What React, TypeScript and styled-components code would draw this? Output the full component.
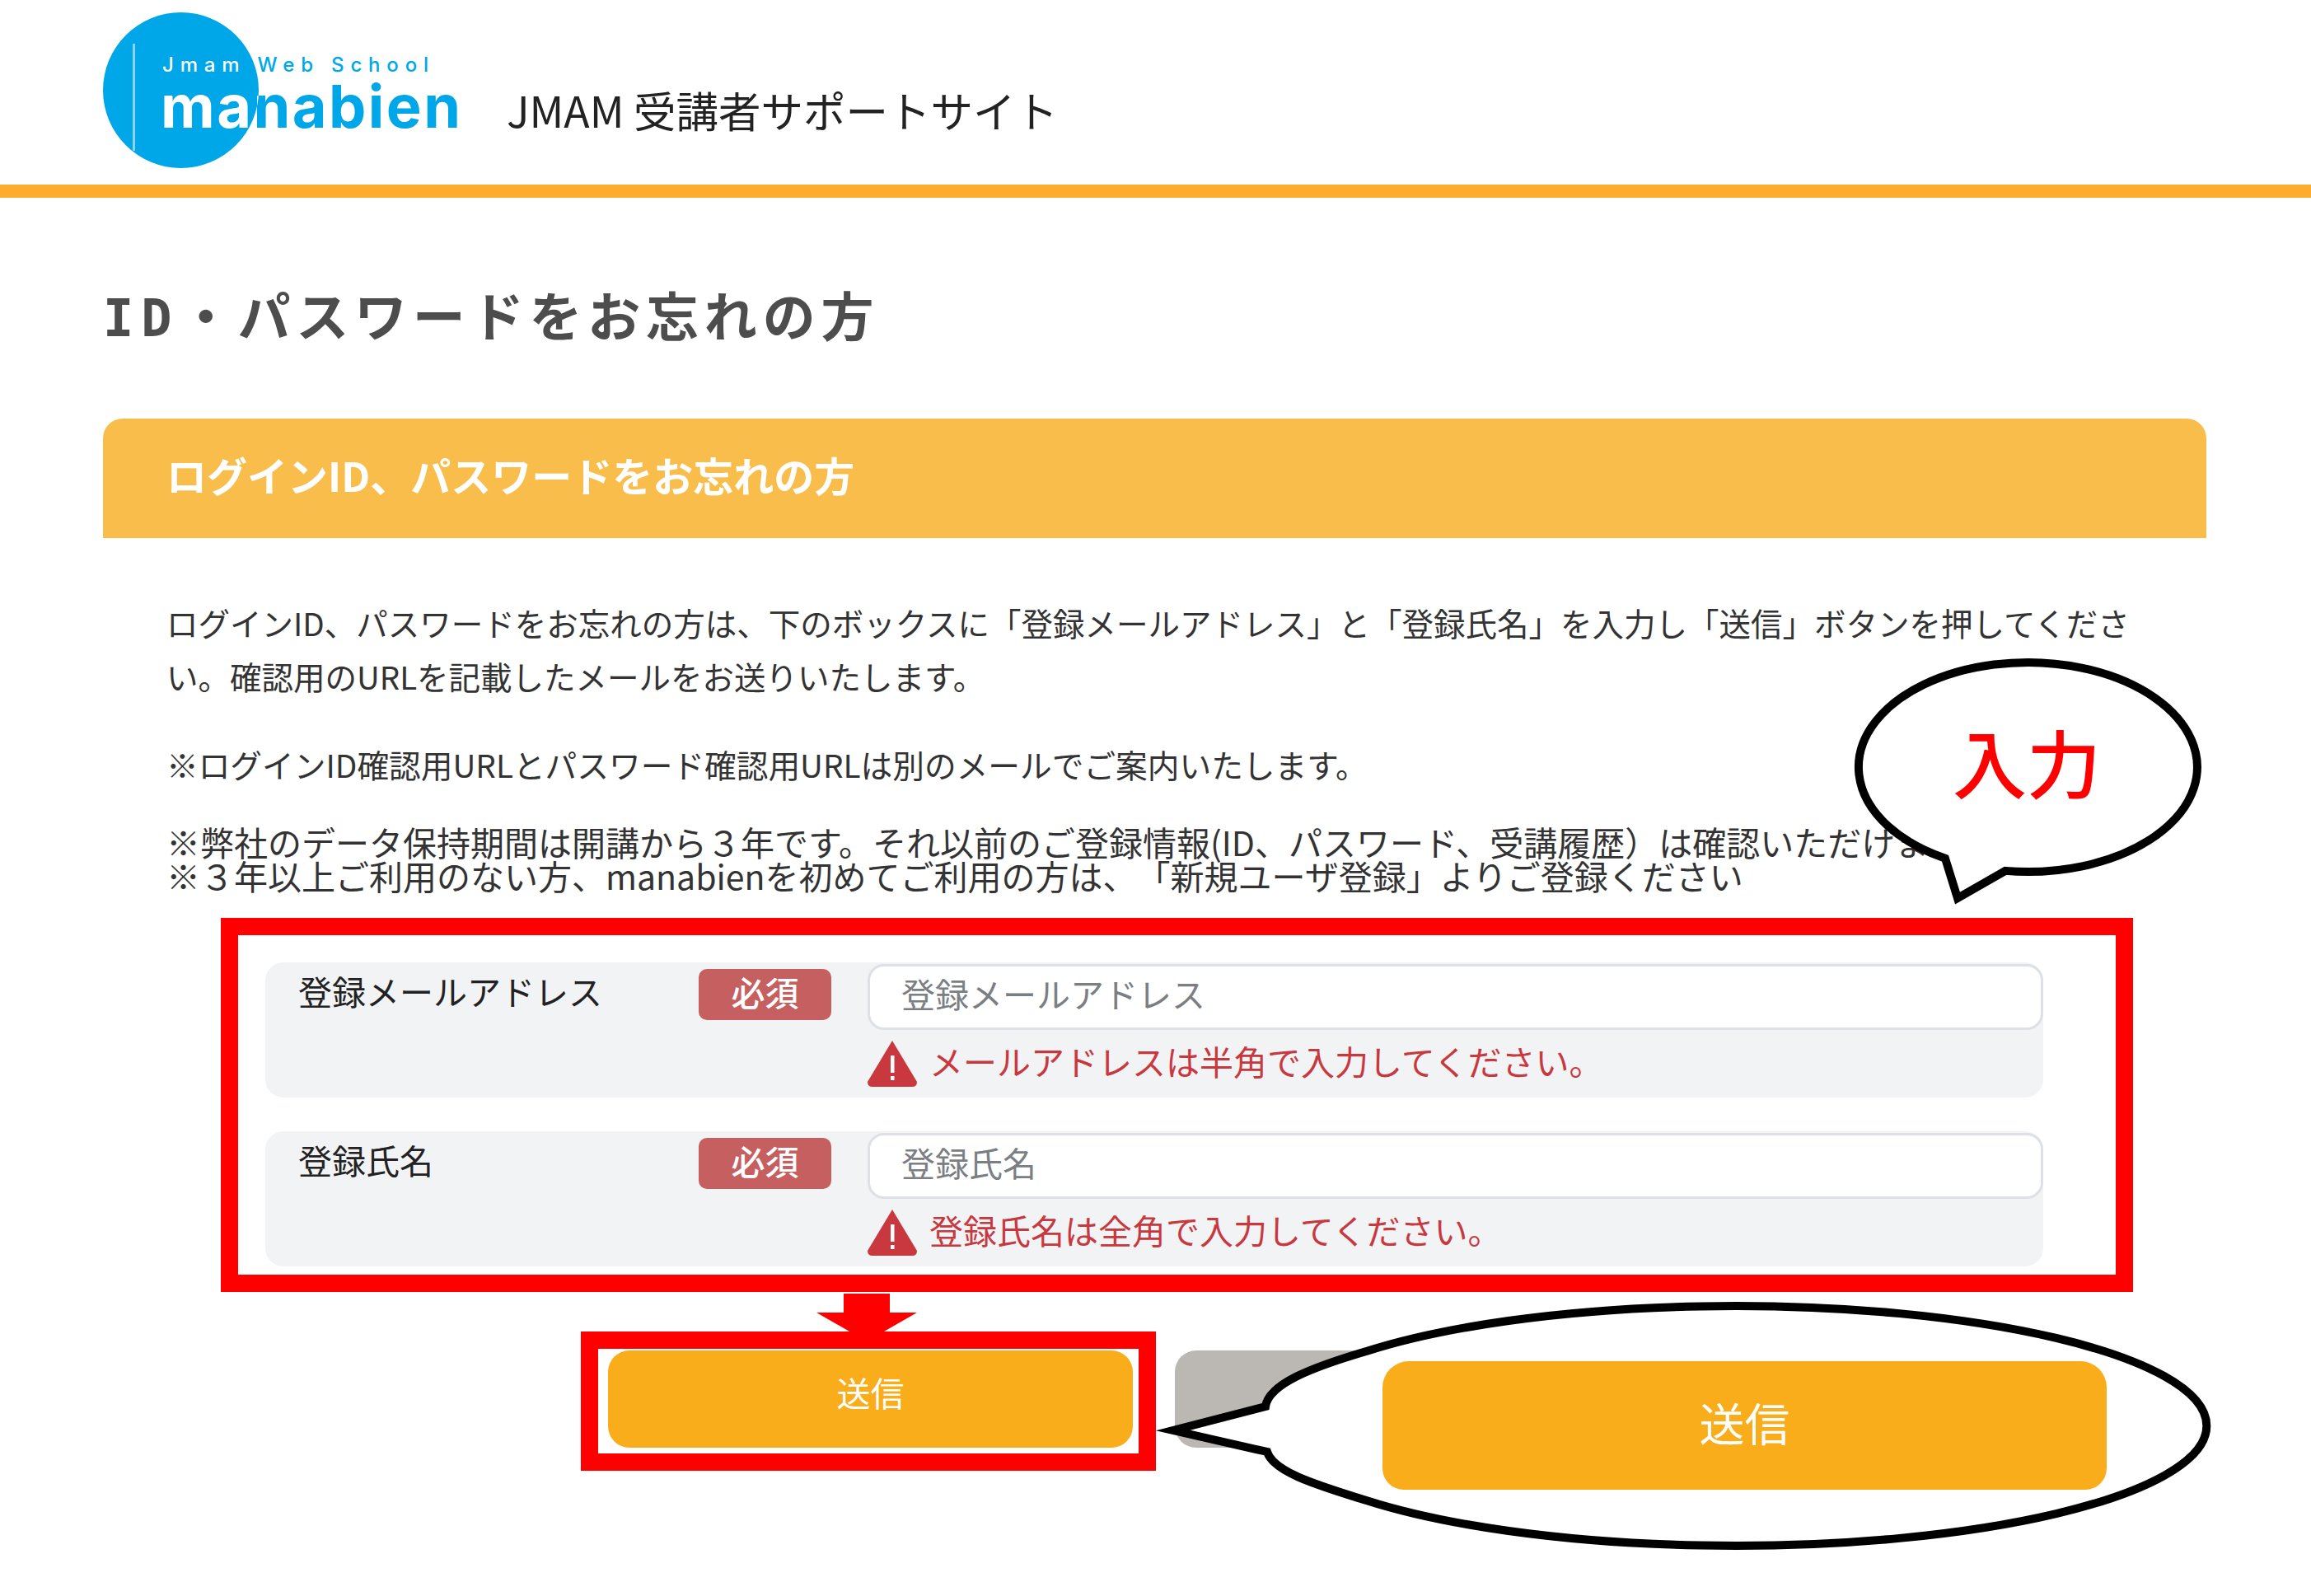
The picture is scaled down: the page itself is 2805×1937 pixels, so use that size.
import styled, { createGlobalStyle } from "styled-components";

const FONT = `"Noto Sans CJK JP", "Noto Sans", sans-serif`;

const Global = createGlobalStyle`
  html, body {
    margin: 0;
    padding: 0;
    background: #fff;
  }
  * {
    box-sizing: border-box;
  }
`;

interface FieldProps {
  label: string;
  error: string;
}

function Field(props: FieldProps) {
  return (
    <FieldRow>
      <FieldLabel>{props.label}</FieldLabel>
      <RequiredBadge>必須</RequiredBadge>
      <FieldInput placeholder={props.label} />
      <ErrorLine>
        <svg width="60" height="56" viewBox="0 0 60 56">
          <path d="M30 0 L60 50 Q60 56 54 56 L6 56 Q0 56 0 50 Z" fill="#c8383e" />
          <rect x="28" y="18" width="4.5" height="21" fill="#fff" />
          <rect x="28" y="43" width="4.5" height="5" fill="#fff" />
        </svg>
        <ErrorText>{props.error}</ErrorText>
      </ErrorLine>
    </FieldRow>
  );
}

function Logo() {
  return (
    <svg width="460" height="224" viewBox="0 0 460 224">
      <defs>
        {/* letters turn white where they cross the circle */}
        <pattern id="logo-ink" patternUnits="userSpaceOnUse" width="460" height="224">
          <rect width="460" height="224" fill="#00a7e8" />
          <circle cx="94.5" cy="109.5" r="94.5" fill="#fff" />
        </pattern>
      </defs>
      <circle cx="94.5" cy="109.5" r="94.5" fill="#00a7e8" />
      <rect x="36" y="53" width="3" height="130" fill="#8dd4f3" />
      <LogoSmall x="72" y="87" textLength="323" fill="url(#logo-ink)">Jmam Web School</LogoSmall>
      <LogoBig x="70" y="155" textLength="364" fill="url(#logo-ink)">manabien</LogoBig>
    </svg>
  );
}

export default function App() {
  return (
    <Page>
      <Global />
      <Header>
        <Logo />
        <SiteTitle>JMAM 受講者サポートサイト</SiteTitle>
      </Header>
      <Main>
        <PageTitle><Latin>ID</Latin>・パスワードをお忘れの方</PageTitle>
        <PanelHead>ログインID、パスワードをお忘れの方</PanelHead>
        <PanelBody>
          <Lead>
            ログインID、パスワードをお忘れの方は、下のボックスに「登録メールアドレス」と「登録氏名」を入力し「送信」ボタンを押してください。確認用のURLを記載したメールをお送りいたします。
          </Lead>
          <Note>※ログインID確認用URLとパスワード確認用URLは別のメールでご案内いたします。</Note>
          <Retention>
            <div>※弊社のデータ保持期間は開講から３年です。それ以前のご登録情報(ID、パスワード、受講履歴）は確認いただけません。</div>
            <div>※３年以上ご利用のない方、manabienを初めてご利用の方は、「新規ユーザ登録」よりご登録ください</div>
          </Retention>
          <Fields>
            <Field label="登録メールアドレス" error="メールアドレスは半角で入力してください。" />
            <Field label="登録氏名" error="登録氏名は全角で入力してください。" />
          </Fields>
          <Actions>
            <SendButton>送信</SendButton>
            <BackButton />
          </Actions>
        </PanelBody>
      </Main>

      <InputFrame />
      <SendFrame />
      <CalloutDrawing width="2805" height="1937" viewBox="0 0 2805 1937">
        <path d="M1024 1570 H1080 V1593 H1113 L1052 1628 L991 1593 H1024 Z" fill="#f00" />
        <path
          d="M2434 1056.86 A205.5 127 0 1 0 2361 1041.8 L2376 1090 Z"
          fill="#fff"
          stroke="#000"
          strokeWidth="10"
          strokeMiterlimit="10"
        />
        <path
          d="M1536 1707 C1540 1680 1590 1660 1660 1639.5 A572 145.5 0 1 1 1660 1821.5 C1590 1800 1545 1785 1538 1762 L1424 1736 Z"
          fill="#fff"
          stroke="#000"
          strokeWidth="10"
          strokeMiterlimit="10"
        />
      </CalloutDrawing>
      <InputCaption>入力</InputCaption>
      <ZoomedButton>送信</ZoomedButton>
    </Page>
  );
}

const Page = styled.div`
  position: relative;
  width: 2805px;
  min-height: 1937px;
  font-family: ${FONT};
  color: #333;
  overflow: hidden;
  text-spacing-trim: space-all;
`;

const Header = styled.header`
  display: flex;
  align-items: flex-start;
  height: 240px;
  padding-left: 125px;
  border-bottom: 16px solid #fdad2b;
`;

const LogoSmall = styled.text`
  font-family: "Inter", "Liberation Sans", sans-serif;
  font-size: 24px;
  font-weight: 500;
`;

const LogoBig = styled.text`
  font-family: "Inter", "Liberation Sans", sans-serif;
  font-size: 72px;
  font-weight: 700;
`;

const SiteTitle = styled.div`
  margin: 96px 0 0 30px;
  font-size: 51.5px;
  line-height: 74px;
  color: #222;
  white-space: nowrap;
`;

const Main = styled.main`
  padding: 0 127px 0 125px;
`;

const PageTitle = styled.h1`
  margin: 101px 0 0;
  height: 167px;
  font-size: 64px;
  line-height: 78px;
  font-weight: 700;
  letter-spacing: 6.8px;
  color: #4d4d4d;
`;

const Latin = styled.span`
  font-family: "DejaVu Sans Mono", monospace;
  letter-spacing: 9px;
  font-size: 62px;
`;

const PanelHead = styled.div`
  height: 145px;
  padding: 0 77px 10px;
  display: flex;
  align-items: center;
  background: #f9bd4c;
  border-radius: 24px 24px 0 0;
  color: #fff;
  font-size: 49px;
  font-weight: 700;
`;

const PanelBody = styled.div`
  padding: 70px 0 0 77px;
`;

const Lead = styled.p`
  margin: 0;
  width: 2400px;
  font-size: 38.5px;
  line-height: 65px;
`;

const Note = styled.p`
  margin: 42px 0 0;
  font-size: 38.7px;
  line-height: 65px;
`;

const Retention = styled.div`
  margin-top: 41px;
  font-size: 41px;
  line-height: 41px;
  white-space: nowrap;
`;

const Fields = styled.div`
  margin: 85px 0 0 120px;
  width: 2158px;
  display: flex;
  flex-direction: column;
  gap: 41px;
`;

const FieldRow = styled.div`
  display: grid;
  grid-template-columns: 482px 161px 1fr;
  grid-template-rows: auto auto;
  align-content: start;
  column-gap: 44px;
  height: 164px;
  padding-top: 2px;
  background: #f2f3f5;
  border-radius: 22px;
`;

const FieldLabel = styled.div`
  padding-left: 40px;
  font-size: 41px;
  line-height: 65px;
  color: #222;
`;

const RequiredBadge = styled.div`
  height: 62px;
  margin-top: 6px;
  padding-bottom: 8px;
  display: flex;
  align-items: center;
  justify-content: center;
  background: #c66060;
  border-radius: 10px;
  color: #fff;
  font-size: 41px;
  font-weight: 500;
`;

const FieldInput = styled.input`
  width: 100%;
  height: 80px;
  padding: 0 38px 10px;
  background: #fff;
  border: 3px solid #dde1e6;
  border-radius: 20px;
  font-family: ${FONT};
  font-size: 41px;
  outline: none;

  &::placeholder {
    color: #7b7f84;
    opacity: 1;
  }
`;

const ErrorLine = styled.div`
  grid-column: 3;
  display: flex;
  align-items: center;
  gap: 15px;
  margin-top: 13px;
  height: 56px;
  color: #c8393f;
  font-size: 41px;
`;

const ErrorText = styled.span`
  padding-bottom: 9px;
`;

const Actions = styled.div`
  margin: 102px 0 0 536px;
  display: flex;
  gap: 51px;
`;

const SendButton = styled.div`
  width: 637px;
  height: 118px;
  padding-bottom: 18px;
  display: flex;
  align-items: center;
  justify-content: center;
  background: #faad1a;
  border-radius: 26px;
  color: #fff;
  font-size: 41px;
`;

const BackButton = styled(SendButton)`
  background: #bbb8b3;
`;

const InputFrame = styled.div`
  position: absolute;
  left: 268px;
  top: 1114px;
  width: 2321px;
  height: 454px;
  border: 21px solid #f00;
`;

const SendFrame = styled.div`
  position: absolute;
  left: 705px;
  top: 1616px;
  width: 698px;
  height: 169px;
  border: 21px solid #f00;
`;

const CalloutDrawing = styled.svg`
  position: absolute;
  left: 0;
  top: 0;
`;

const InputCaption = styled.div`
  position: absolute;
  left: 2370px;
  top: 863px;
  font-size: 90px;
  line-height: 120px;
  font-weight: 500;
  color: #f00;
`;

const ZoomedButton = styled.div`
  position: absolute;
  left: 1678px;
  top: 1652px;
  width: 879px;
  height: 156px;
  padding-bottom: 10px;
  display: flex;
  align-items: center;
  justify-content: center;
  background: #faad1a;
  border-radius: 32px 32px 26px 26px;
  color: #fff;
  font-size: 55px;
`;
